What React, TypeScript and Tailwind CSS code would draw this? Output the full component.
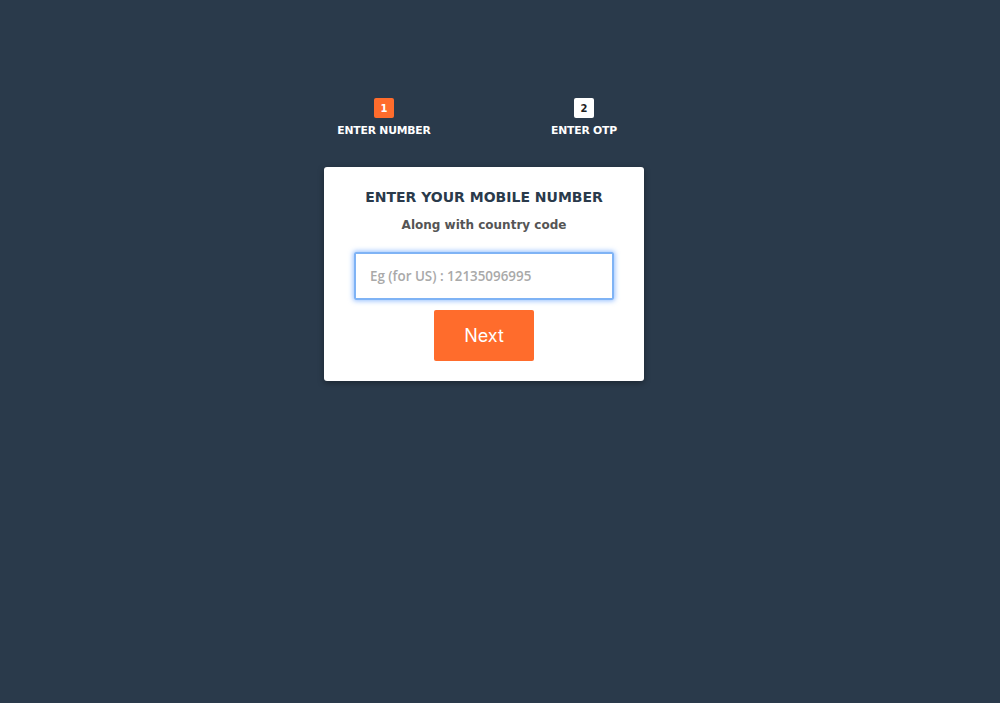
import React from "react";

export default function App() {
  const font = { fontFamily: '"DejaVu Sans", "Open Sans", sans-serif' };
  return (
    <div className="min-h-[703px] w-full bg-[#2a3a4b]" style={font}>
      <div className="ml-[284px] w-[400px] pt-[98px]">
        <div className="flex">
          <div className="flex w-[200px] flex-col items-center">
            <div className="flex h-[20px] w-[20px] items-center justify-center rounded-[2px] bg-[#ff6c2c] text-[10px] font-bold text-white">1</div>
            <div className="mt-[7px] text-[10.8px] font-bold leading-[12px] tracking-[-0.2px] text-white">ENTER NUMBER</div>
          </div>
          <div className="flex w-[200px] flex-col items-center">
            <div className="flex h-[20px] w-[20px] items-center justify-center rounded-[2px] bg-white text-[10px] font-bold text-[#222]">2</div>
            <div className="mt-[7px] text-[10.8px] font-bold leading-[12px] tracking-[-0.2px] text-white">ENTER OTP</div>
          </div>
        </div>
        <div className="mx-[40px] mt-[30px] flex flex-col items-center rounded-[3px] bg-white pb-[20px] pt-[20px] shadow-[0_2px_6px_rgba(0,0,0,0.35)]">
          <div className="text-[14px] font-semibold leading-[20px] text-[#2a3a4b]">ENTER YOUR MOBILE NUMBER</div>
          <div className="mt-[10px] text-[12px] font-semibold leading-[16px] text-[#555]">Along with country code</div>
          <input
            className="mt-[19px] h-[48px] w-[260px] rounded-[2px] border-2 border-[#7fb3f5] px-[14px] text-[13.4px] font-semibold text-[#333] outline-none shadow-[0_0_5px_1px_rgba(80,150,255,0.6)] placeholder:text-[#a9a9a9]"
            placeholder="Eg (for US) : 12135096995"
            style={{ fontFamily: '"Open Sans", sans-serif' }}
          />
          <button
            className="mt-[10px] h-[51px] w-[100px] rounded-[2px] bg-[#ff6c2c] text-[18px] text-white"
            style={{ fontFamily: 'Inter, "Liberation Sans", sans-serif' }}
          >
            Next
          </button>
        </div>
      </div>
    </div>
  );
}
